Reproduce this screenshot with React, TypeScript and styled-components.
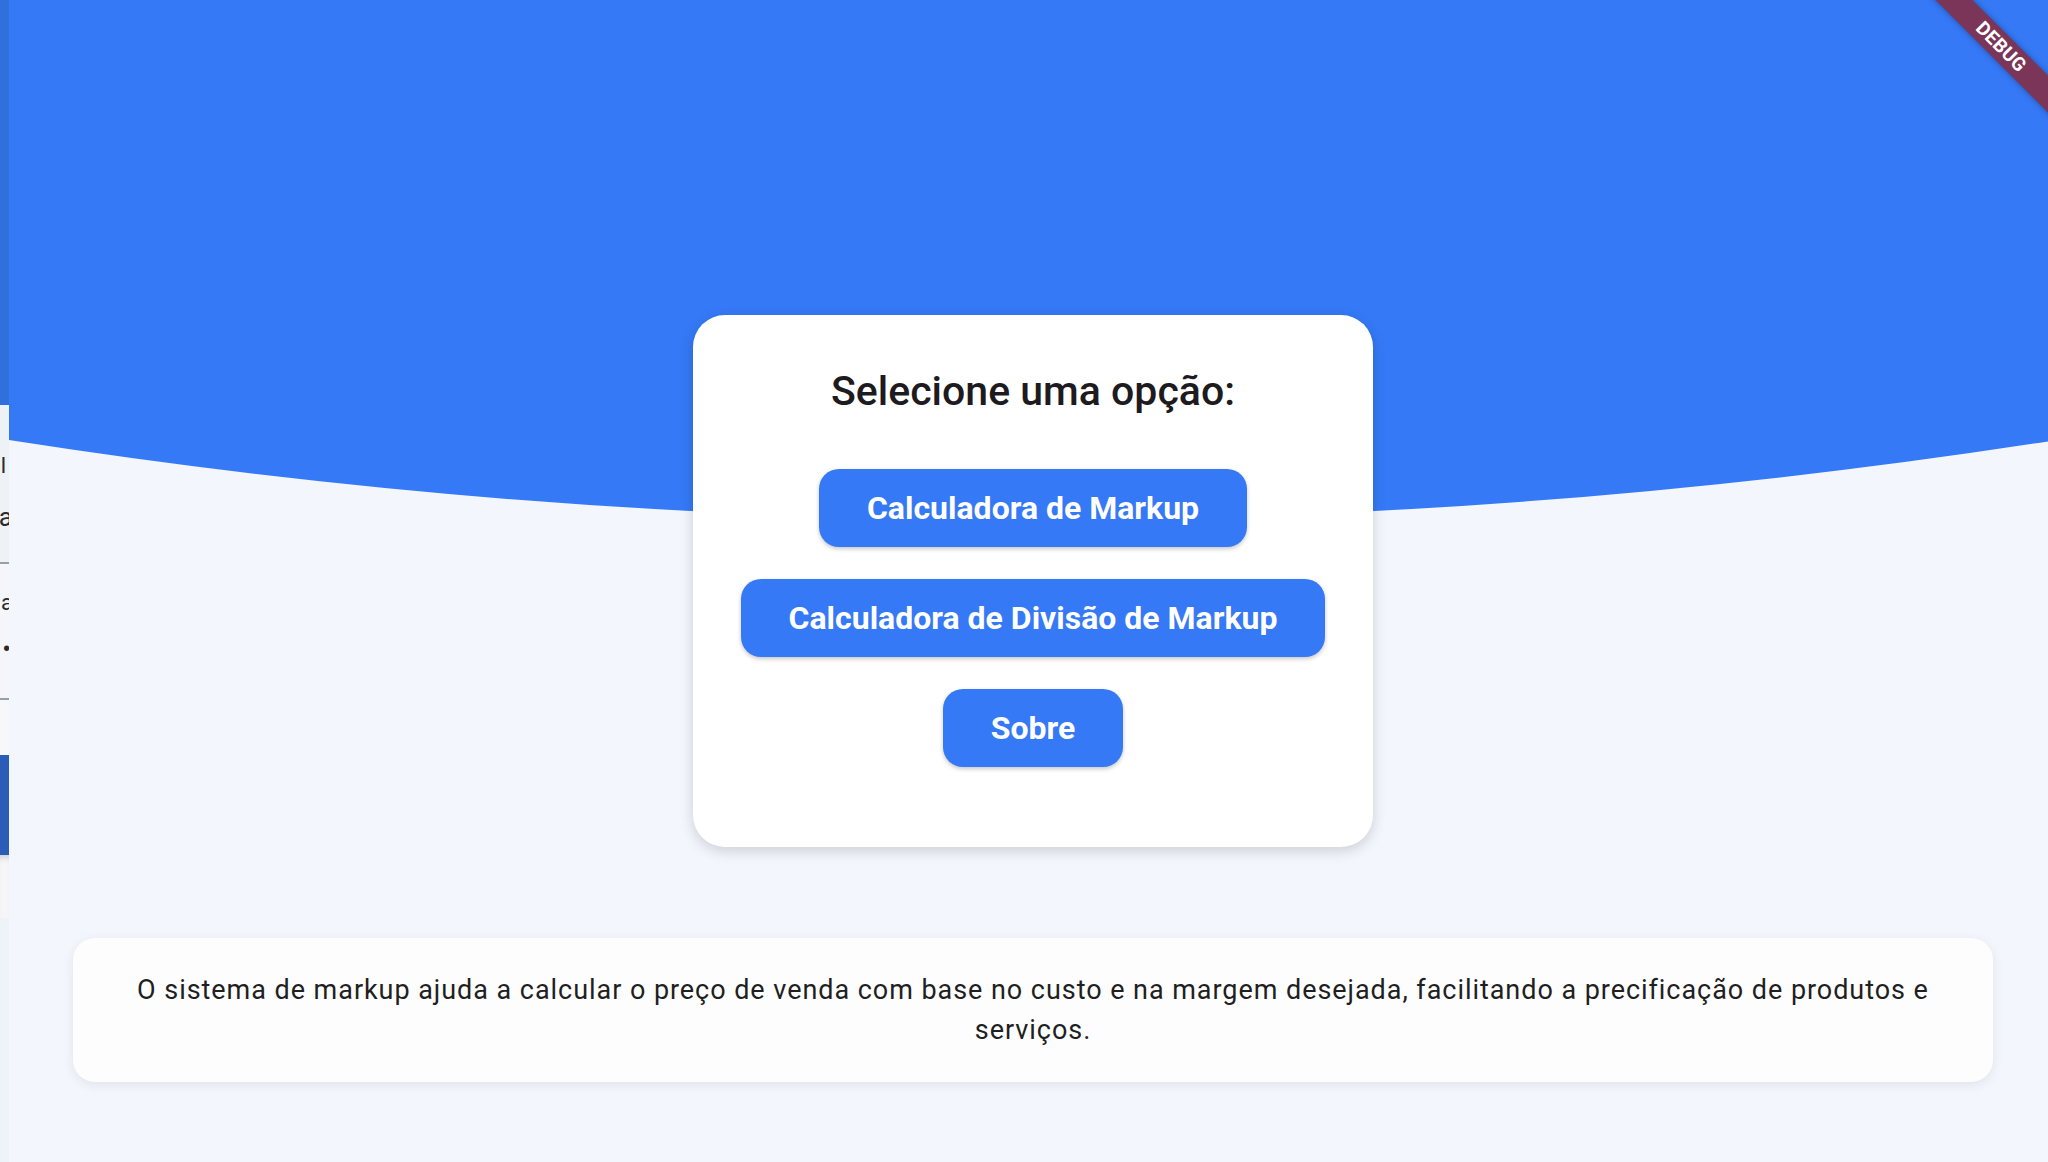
import React from "react";
import styled, { createGlobalStyle } from "styled-components";

const GlobalStyle = createGlobalStyle`
  html, body {
    margin: 0;
    padding: 0;
    width: 2048px;
    height: 1162px;
    overflow: hidden;
    font-family: Roboto, "Noto Sans", "Liberation Sans", sans-serif;
  }
  * { box-sizing: border-box; }
`;

const BLUE = "#3579F6";

const Screen = styled.div`
  position: relative;
  display: flex;
  width: 2048px;
  height: 1162px;
  overflow: hidden;
  background: #f3f6fd;
`;

/* The previous route still visible during the page transition */
const PrevPage = styled.div`
  flex: 0 0 9px;
  display: flex;
  flex-direction: column;
  overflow: hidden;
`;

const PrevSection = styled.div<{ $h: number; $bg: string; $shadow?: boolean }>`
  flex: 0 0 ${(p) => p.$h}px;
  background: ${(p) => p.$bg};
  display: flex;
  flex-direction: column;
  align-items: flex-end;
  overflow: hidden;
  box-shadow: ${(p) => (p.$shadow ? "inset 0 6px 6px -4px rgba(0,0,0,0.18)" : "none")};
`;

const PrevDivider = styled.div`
  flex: 0 0 2px;
  background: #9a9ea6;
`;

const PrevGlyph = styled.span<{ $mt: number; $size: number; $mr: number }>`
  margin-top: ${(p) => p.$mt}px;
  margin-right: ${(p) => p.$mr}px;
  font-size: ${(p) => p.$size}px;
  line-height: 1;
  height: ${(p) => p.$size}px;
  color: #2a2a2e;
  white-space: nowrap;
`;

const Viewport = styled.div`
  flex: 1 1 auto;
  overflow: hidden;
`;

const Page = styled.div`
  position: relative;
  width: 2048px;
  height: 1162px;
  background: #f3f6fd;
  display: flex;
  flex-direction: column;
  align-items: center;
  padding-top: 315px;
`;

const HeaderWave = styled.svg`
  position: absolute;
  top: 0;
  left: 0;
  width: 2048px;
  height: 600px;
  z-index: 0;
`;

const MenuCard = styled.div`
  position: relative;
  z-index: 1;
  width: 680px;
  padding: 52px 0 80px;
  background: #ffffff;
  border-radius: 32px;
  box-shadow: 0 4px 14px rgba(0, 0, 0, 0.16);
  display: flex;
  flex-direction: column;
  align-items: center;
`;

const Title = styled.h1`
  margin: 0 0 54px;
  font-size: 41px;
  line-height: 48px;
  font-weight: 500;
  color: #1d1b20;
`;

const ButtonStack = styled.div`
  display: flex;
  flex-direction: column;
  align-items: center;
  gap: 32px;
`;

const MenuButton = styled.button`
  height: 78px;
  padding: 0 48px;
  border: none;
  border-radius: 20px;
  background: ${BLUE};
  color: #ffffff;
  font-family: Roboto, "Noto Sans", sans-serif;
  font-size: 32px;
  font-weight: 700;
  box-shadow: 0 2px 4px rgba(0, 0, 0, 0.22);
  cursor: pointer;
`;

const InfoCard = styled.div`
  position: relative;
  z-index: 1;
  margin-top: 91px;
  width: 1920px;
  padding: 32px;
  background: #fdfdfe;
  border-radius: 22px;
  box-shadow: 0 3px 12px rgba(0, 0, 0, 0.08);
`;

const InfoText = styled.p`
  margin: 0;
  text-align: center;
  font-size: 27px;
  line-height: 40px;
  letter-spacing: 0.95px;
  color: #1f1f22;
`;

const DebugCorner = styled.div`
  position: absolute;
  top: 0;
  right: 0;
  width: 200px;
  height: 200px;
  overflow: hidden;
  pointer-events: none;
  z-index: 5;
`;

const DebugRibbon = styled.div`
  position: absolute;
  left: 53px;
  top: 34px;
  width: 200px;
  height: 26px;
  transform: rotate(45deg);
  background: #7a3558;
  box-shadow: 0 0 6px rgba(0, 0, 0, 0.35);
  color: #ffffff;
  font-family: Roboto, "Noto Sans", sans-serif;
  font-size: 19px;
  font-weight: 700;
  line-height: 26px;
  text-align: center;
  letter-spacing: 0.3px;
`;

export default function App() {
  return (
    <>
      <GlobalStyle />
      <Screen>
        <PrevPage>
          <PrevSection $h={405} $bg="#3070dc" />
          <PrevSection $h={157} $bg="#eef1f6">
            <PrevGlyph $mt={50} $size={22} $mr={3}>l</PrevGlyph>
            <PrevGlyph $mt={27} $size={26} $mr={-4}>a</PrevGlyph>
          </PrevSection>
          <PrevDivider />
          <PrevSection $h={134} $bg="#f4f6f9">
            <PrevGlyph $mt={28} $size={22} $mr={-4}>a</PrevGlyph>
            <PrevGlyph $mt={22} $size={26} $mr={-2}>•</PrevGlyph>
          </PrevSection>
          <PrevDivider />
          <PrevSection $h={55} $bg="#f7f8fa" />
          <PrevSection $h={100} $bg="#2b5db8" />
          <PrevSection $h={63} $bg="#f6f6f8" $shadow />
          <PrevSection $h={244} $bg="#eef2f9" />
        </PrevPage>
        <Viewport>
          <Page>
            <HeaderWave viewBox="0 0 2048 600" aria-hidden="true">
              <path d="M0 0 H2048 V440 Q1024 600 0 440 Z" fill={BLUE} />
            </HeaderWave>
            <MenuCard>
              <Title>Selecione uma opção:</Title>
              <ButtonStack>
                <MenuButton>Calculadora de Markup</MenuButton>
                <MenuButton>Calculadora de Divisão de Markup</MenuButton>
                <MenuButton>Sobre</MenuButton>
              </ButtonStack>
            </MenuCard>
            <InfoCard>
              <InfoText>
                O sistema de markup ajuda a calcular o preço de venda com base no custo e na margem
                desejada, facilitando a precificação de produtos e serviços.
              </InfoText>
            </InfoCard>
          </Page>
        </Viewport>
        <DebugCorner>
          <DebugRibbon>DEBUG</DebugRibbon>
        </DebugCorner>
      </Screen>
    </>
  );
}
